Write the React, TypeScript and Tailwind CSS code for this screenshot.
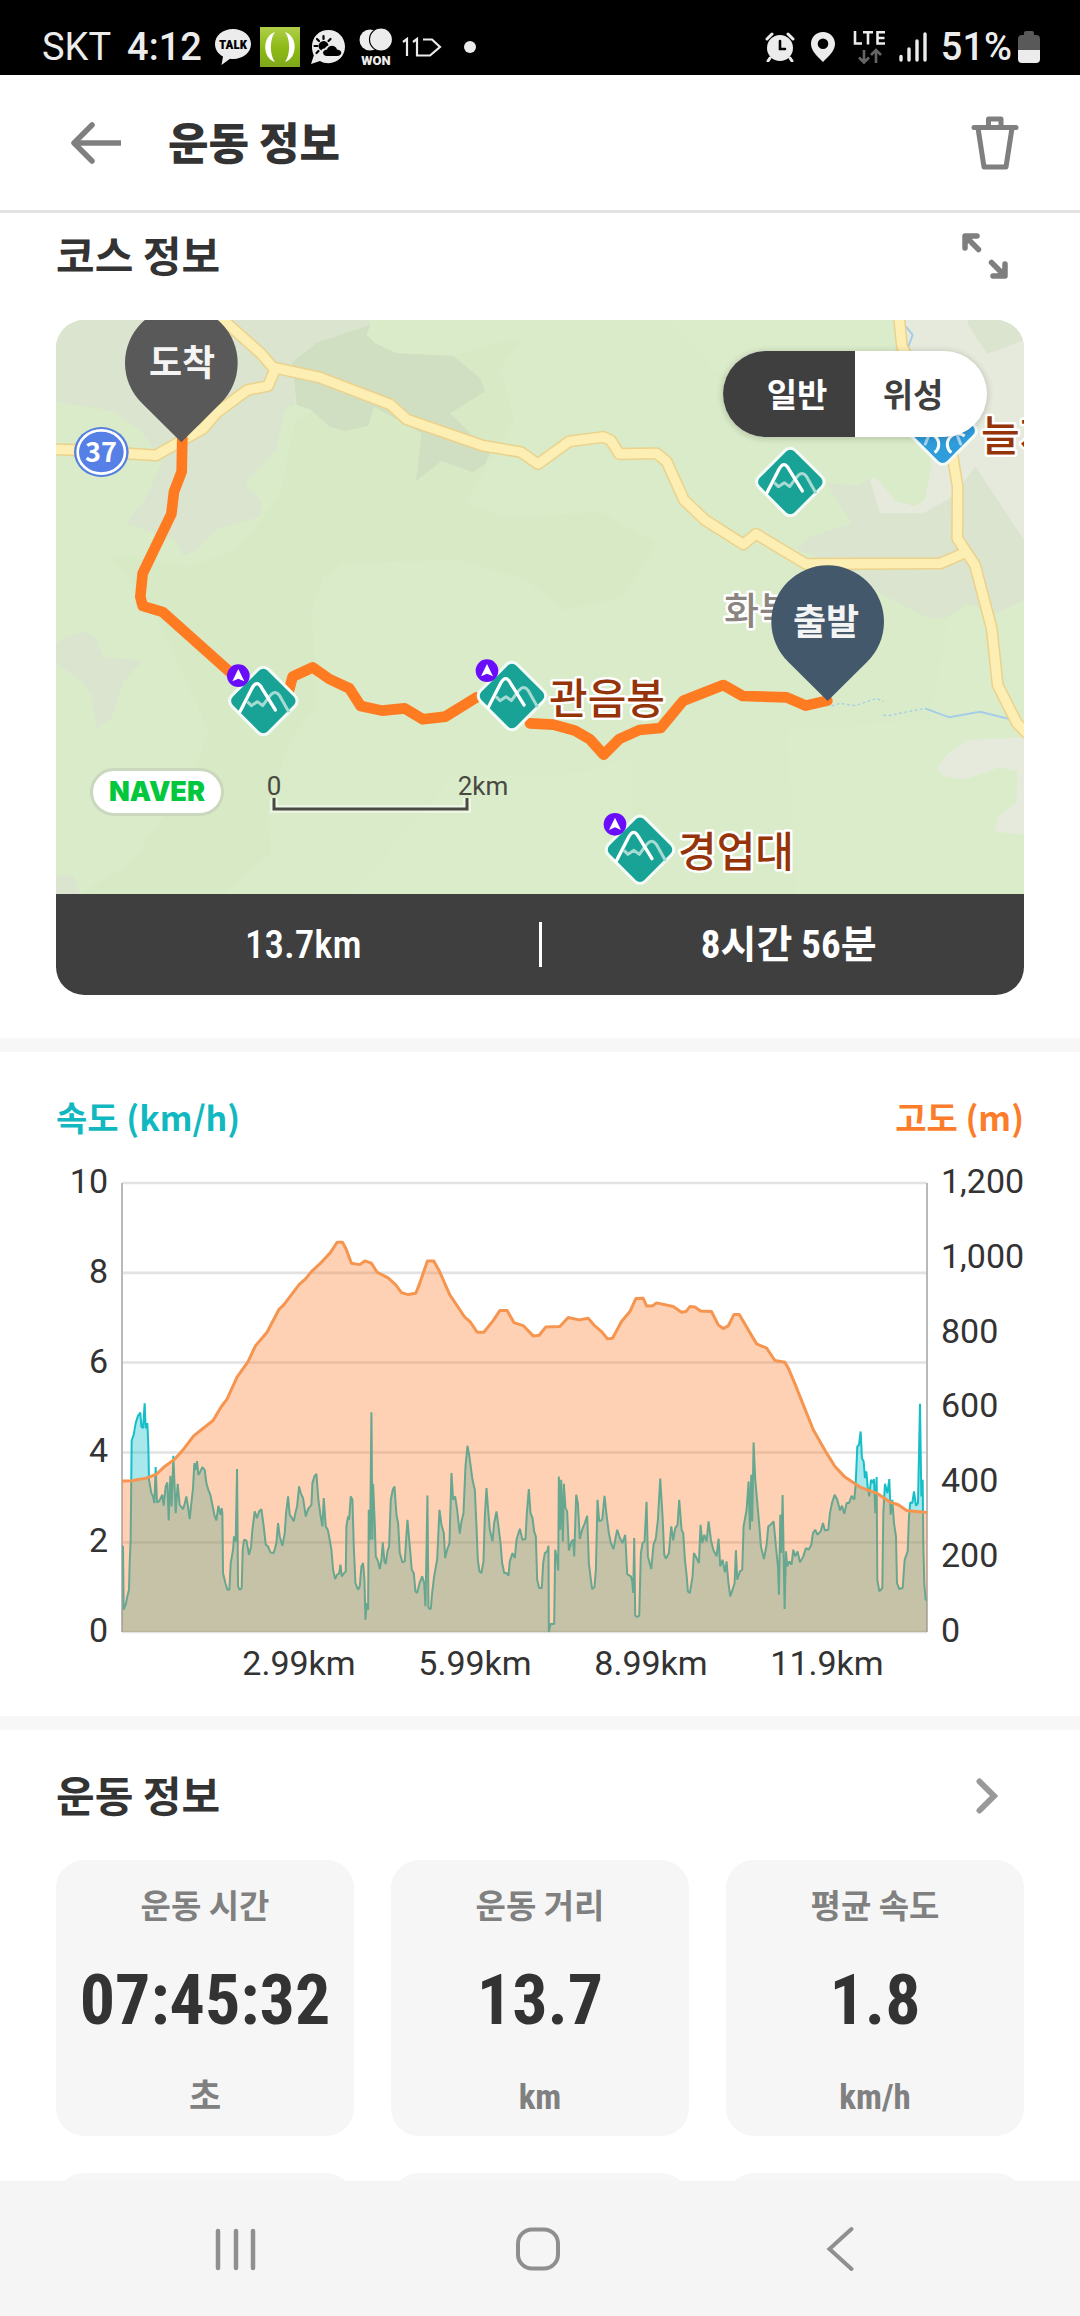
import type { ReactNode } from "react";

// distance / altitude samples, in plot units (x 217..2631, y 309..1657)
const ALTITUDE =
  "217,1204 245,1203 290,1195 322,1182 345,1160 375,1138 400,1110 432,1068 490,1022 515,980 532,958 562,892 595,845 617,798 652,757 688,688 702,675 748,614 768,596 785,575 810,552 842,518 862,487 878,487 888,505 905,550 930,554 945,543 965,550 982,577 1015,594 1038,615 1055,638 1075,644 1098,640 1108,615 1133,543 1152,543 1168,572 1200,645 1245,712 1262,727 1282,757 1302,757 1330,722 1350,692 1372,692 1392,728 1420,737 1450,768 1468,766 1488,741 1530,740 1555,713 1588,720 1615,715 1635,738 1655,755 1673,777 1688,775 1715,725 1740,695 1758,656 1780,655 1790,678 1808,678 1820,669 1870,680 1895,697 1908,695 1920,680 1935,681 1952,693 1985,695 2005,735 2020,746 2035,738 2052,704 2068,704 2120,792 2150,805 2175,842 2205,847 2215,865 2235,912 2260,975 2290,1050 2330,1120 2355,1160 2385,1192 2430,1222 2480,1240 2520,1267 2545,1275 2570,1292 2631,1298";

// speed samples, y runs 0..757 below the top of the speed band
const SPEED =
  "217,500 220,500 222,690 228,675 233,650 238,630 240,550 243,480 246,182 252,165 258,130 265,108 272,98 275,140 280,145 285,70 288,145 293,130 296,200 298,300 305,340 310,350 314,370 318,262 322,368 328,365 338,345 342,378 348,320 353,308 357,422 362,288 366,380 371,228 378,400 384,312 390,375 400,388 405,372 410,350 415,380 420,418 425,370 430,325 434,250 438,270 442,244 446,285 452,275 458,262 465,270 470,310 476,330 482,345 488,375 494,405 500,422 506,378 512,405 516,385 518,400 520,580 527,610 533,630 539,630 543,550 550,510 553,470 558,485 562,268 565,620 570,630 576,625 579,510 583,480 590,482 598,525 604,500 608,450 615,395 622,415 628,395 635,388 642,440 648,495 655,500 662,518 672,520 680,490 685,430 690,470 698,498 705,460 709,400 715,350 720,405 727,415 732,425 738,395 742,380 748,320 753,340 760,355 768,410 775,388 785,375 788,310 794,290 800,282 806,360 812,405 818,440 822,355 828,440 834,450 838,470 845,510 850,570 856,598 862,585 868,582 872,555 876,590 882,582 888,575 890,440 895,410 898,420 903,350 908,360 912,500 917,610 925,630 930,620 935,560 940,550 944,600 947,720 951,670 955,690 957,390 961,480 965,97 968,480 970,312 975,430 978,530 985,545 990,568 995,540 999,488 1004,545 1008,553 1013,515 1018,500 1023,360 1029,330 1034,320 1040,405 1045,430 1050,520 1058,548 1065,545 1069,480 1073,420 1080,500 1086,570 1092,580 1097,635 1102,640 1110,608 1117,590 1123,610 1127,680 1133,347 1136,685 1143,688 1147,640 1153,590 1162,540 1169,390 1175,435 1182,460 1186,535 1192,510 1199,490 1205,280 1210,360 1216,350 1222,390 1230,462 1235,425 1241,400 1247,260 1253,198 1258,225 1264,270 1268,300 1275,330 1280,440 1284,540 1289,575 1295,580 1301,545 1305,410 1310,325 1315,390 1320,450 1328,485 1333,430 1340,395 1346,440 1352,490 1357,550 1363,580 1370,580 1376,588 1380,545 1388,520 1395,535 1400,480 1410,447 1418,480 1427,478 1431,400 1437,328 1442,400 1448,415 1453,455 1458,470 1462,600 1468,625 1476,625 1480,550 1485,520 1492,515 1496,498 1497,757 1502,733 1513,733 1516,510 1522,540 1525,572 1527,290 1531,450 1534,300 1539,485 1542,312 1547,385 1552,395 1557,512 1565,485 1570,480 1573,530 1579,345 1584,370 1590,478 1597,450 1605,430 1612,408 1617,550 1623,600 1627,628 1634,622 1638,570 1643,360 1648,425 1657,420 1664,348 1670,405 1677,460 1683,490 1691,508 1697,475 1702,450 1710,475 1718,490 1726,465 1732,583 1743,590 1747,605 1750,640 1753,475 1756,708 1762,712 1768,708 1773,520 1778,490 1784,485 1790,366 1794,530 1804,568 1811,495 1818,475 1824,420 1831,296 1838,410 1843,525 1848,537 1857,520 1864,440 1870,482 1876,445 1883,435 1888,360 1895,450 1900,460 1905,540 1910,585 1914,635 1920,640 1928,590 1932,520 1940,535 1947,550 1952,435 1957,490 1963,465 1970,485 1976,425 1983,480 1990,510 2000,530 2006,477 2011,560 2018,540 2025,578 2030,545 2035,605 2041,650 2048,630 2054,610 2058,512 2062,600 2070,575 2077,570 2081,440 2090,390 2096,305 2100,450 2104,285 2107,425 2111,188 2116,300 2123,380 2128,435 2133,500 2142,538 2150,495 2155,440 2162,435 2171,425 2178,500 2184,560 2187,645 2191,405 2194,520 2198,346 2204,688 2208,515 2212,560 2218,545 2225,555 2230,510 2236,530 2243,515 2250,548 2260,530 2268,505 2276,510 2284,495 2289,460 2296,450 2302,465 2312,455 2319,430 2325,452 2335,450 2340,400 2346,370 2354,345 2362,360 2370,392 2376,378 2383,402 2390,370 2397,370 2405,348 2413,360 2417,315 2422,200 2427,195 2432,155 2436,235 2441,245 2445,295 2449,275 2453,320 2458,350 2463,300 2468,310 2472,298 2476,400 2480,292 2482,600 2488,635 2497,625 2500,400 2505,312 2512,340 2518,298 2522,405 2527,360 2532,430 2538,470 2541,610 2548,628 2558,625 2564,540 2573,515 2577,410 2581,368 2587,370 2592,335 2598,378 2604,370 2610,72 2614,350 2618,300 2620,500 2623,615 2627,660 2631,660";

const ROADS = [
  "M10,418 L72,420 L318,436 L460,355 L500,308 L592,240 L654,228 L675,178",
  "M500,12 L632,130 L668,172 L808,202 L1020,283 L1070,328 L1298,407 L1412,426 L1464,462 L1558,394 L1660,381 L1682,391 L1708,432 L1820,430 L1850,455 L1902,570 L1965,630 L2080,703 L2118,672 L2268,762 L2672,760 L2745,728",
  "M2546,10 L2556,110 L2640,260 L2708,440 L2723,530 L2722,685 L2745,720 L2775,765 L2825,955 L2843,1125 L2900,1238 L2940,1280",
];

const ROUTE =
  "M397,385 L395,485 L372,545 L364,612 L278,790 L271,860 L278,888 L338,906 L600,1140 M716,1145 L728,1100 L788,1072 L838,1107 L898,1135 L932,1188 L996,1202 L1064,1195 L1119,1228 L1186,1220 L1280,1162 M1440,1240 L1510,1244 L1575,1262 L1620,1288 L1661,1334 L1708,1287 L1768,1260 L1832,1254 L1900,1172 L2020,1125 L2078,1158 L2210,1162 L2267,1187 L2332,1172";

const STATS = [
  { label: "운동 시간", value: "07:45:32", unit: "초" },
  { label: "운동 거리", value: "13.7", unit: "km" },
  { label: "평균 속도", value: "1.8", unit: "km/h" },
];

const StatusBar = () => (
  <div className="flex h-[75px] shrink-0 items-center justify-between bg-black pl-[42px] pr-10 pt-[18px] font-['Roboto',sans-serif] text-[38px] leading-[56px] text-[#ececec]">
    <div className="flex items-center">
      <span>SKT</span>
      <span className="ml-4 font-medium">4:12</span>
      <svg className="ml-3 h-9 w-[38px]" viewBox="0 0 38 36">
        <path d="M19 0C9 0 1 6.500 1 15c0 5.500 3.300 10 8 12.600L7.500 36l8.500-6.200c1 .1 2 .2 3 .2 10 0 18-6.500 18-15S29 0 19 0z" fill="#ececec" />
        <text x="19" y="20" textAnchor="middle" className="fill-black font-['Roboto_Condensed',sans-serif] text-[13px] font-black">TALK</text>
      </svg>
      <svg className="ml-2 h-10 w-10" viewBox="0 0 40 40">
        <defs>
          <linearGradient id="lime" x1="0" y1="0" x2="0" y2="1">
            <stop offset="0" stopColor="#b0cf48" />
            <stop offset=".55" stopColor="#8cb914" />
            <stop offset="1" stopColor="#80a81c" />
          </linearGradient>
        </defs>
        <rect width="40" height="40" fill="url(#lime)" />
        <path d="M15 5C2 9 2 31 15 35 9.500 28 9.500 12 15 5zM25 5c13 4 13 26 0 30 5.500-7 5.500-23 0-30z" fill="#fff" />
      </svg>
      <svg className="ml-2.5 h-9 w-9" viewBox="0 0 36 36">
        <path d="M18.500 1C8.500 1 2 8.500 2 17.500c0 4 .8 6.500 1.800 9L1 35l9-3c2.500 1.500 5 2.200 8.500 2.200C28 34.200 35 27 35 17.600 35 8.500 28 1 18.500 1z" fill="#ececec" />
        <path d="M9.500 20a5 5 0 1 1 9-3.500c-2 .5-3 1.500-3.500 3-2 0-3 .5-3.500 2z" />
        <path d="M13.500 7v3M4.500 17h3M7 10l2 2M20.500 10l-2 2M6.500 24l2-2" stroke="#000" strokeWidth="2.200" strokeLinecap="round" />
        <path d="M17 27c-5 0-5.500-6 0-6.500 1.500-5 8.500-5 10 0 6 .5 5.500 6.500 0 6.500z" />
      </svg>
      <svg className="ml-3 h-[38px] w-9 overflow-visible" viewBox="0 0 36 38">
        <circle cx="12" cy="12" r="10.500" fill="#ececec" />
        <circle cx="23" cy="11.500" r="11.500" fill="#ececec" stroke="#000" strokeWidth="1.200" />
        <text x="18" y="37" textAnchor="middle" className="fill-[#ececec] font-['Roboto',sans-serif] text-[13px] font-black">WON</text>
      </svg>
      <svg className="ml-2 h-5 w-10" viewBox="0 0 40 20" fill="none" stroke="#ececec" strokeWidth="2.200">
        <path d="M1 5l4-3v17M11 5l4-3v16.500h13l10-8.500-8-7.500h-9" />
      </svg>
      <span className="ml-[22px] h-3 w-3 rounded-full bg-[#ececec]" />
    </div>
    <div className="flex items-center">
      <svg className="h-[30px] w-[30px]" viewBox="0 0 30 30">
        <circle cx="15" cy="16" r="13" fill="#ececec" />
        <path d="M2 7l5-5M28 7l-5-5M5 26l-2 3M25 26l2 3" stroke="#ececec" strokeWidth="3" strokeLinecap="round" />
        <path d="M15 9v8h5" fill="none" stroke="#000" strokeWidth="2.600" strokeLinecap="round" />
      </svg>
      <svg className="ml-4 h-[30px] w-6" viewBox="0 0 24 30">
        <path fillRule="evenodd" d="M12 0C5 0 0 5 0 12c0 7 7 13 12 18 5-5 12-11 12-18C24 5 19 0 12 0zm0 6.500a5.300 5.300 0 1 1 0 10.600 5.300 5.300 0 0 1 0-10.600z" fill="#ececec" />
      </svg>
      <svg className="ml-[18px] h-[34px] w-[34px]" viewBox="0 0 34 34">
        <path d="M2 1v12.500h7M10 2.200h10M15 2v12.500M32 2.200h-7.500v11.300H32M25 8h6.500" fill="none" stroke="#ececec" strokeWidth="2.600" />
        <path d="M11 20v12M6 27.500l5 5 5-5M23 33V20M18 25l5-5 5 5" fill="none" stroke="#666" strokeWidth="2.600" />
      </svg>
      <svg className="ml-3 h-[30px] w-7" viewBox="0 0 28 30" stroke="#ececec" strokeWidth="3.400" strokeLinecap="round">
        <path d="M2 24.500V28M10 17v11M18 9v19M26 2v26" />
      </svg>
      <span className="ml-3.5 font-medium">51%</span>
      <svg className="ml-1.5 h-8 w-[22px]" viewBox="0 0 22 32">
        <path d="M6 4V2q0-2 2-2h6q2 0 2 2v2h2q4 0 4 4v11H0V8q0-4 4-4z" fill="#595959" />
        <path d="M0 19h22v9q0 4-4 4H4q-4 0-4-4z" fill="#ececec" />
      </svg>
    </div>
  </div>
);

const Peak = ({ x, y, badge = false }: { x: number; y: number; badge?: boolean }) => (
  <g transform={`translate(${x} ${y})`}>
    <rect x="-78" y="-78" width="156" height="156" rx="22" transform="rotate(45)" fill="#18a396" stroke="#f4fbf6" strokeWidth="9" />
    <path d="M-48,2 L-36,14 L-18,2 L-2,14 L14,-8 L22,-18 Q36,-34 49,-16 L77,34" fill="none" stroke="#a6dbd3" strokeWidth="9" strokeLinejoin="round" />
    <path d="M-71,34 L-34,-38 Q-19,-66 -4,-38 L36,27" fill="none" stroke="#fff" strokeWidth="10" strokeLinecap="round" />
    {badge && (
      <g transform="translate(-75 -76)">
        <circle r="34" fill="#6a0dfb" />
        <path d="M0,-20 L18,17 L0,9 L-18,17Z" fill="#fff" />
      </g>
    )}
  </g>
);

const MapPin = ({ x, y, className }: { x: number; y: number; className: string }) => (
  <path transform={`translate(${x} ${y})`} d="M0,237 L-118,120 A169,169 0 1 1 118,120Z" className={className} />
);

const MapLabel = ({ x, y, children }: { x: number; y: number; children: ReactNode }) => (
  <text
    x={x}
    y={y}
    className="fill-[#953409] stroke-white stroke-[5px] font-['Noto_Sans_CJK_KR',sans-serif] text-[42px] font-medium [paint-order:stroke] [stroke-linejoin:round]"
  >
    {children}
  </text>
);

const CourseMap = () => (
  <svg className="block h-[574px] w-full bg-[#d9ebc8]" viewBox="0 0 968 574" preserveAspectRatio="xMidYMid slice">
    <g transform="translate(-6 -10) scale(0.33333)">
      {/* woodland */}
      <path d="M735,330 L690,560 L560,720 L420,770 L185,735 L330,940 L475,1260 L430,1400 L240,1660 L90,1752 L520,1752 L664,1630 L650,1500 L720,1290 L800,1190 L785,900 L820,800 L880,760 L1230,750 L1430,810 L1540,900 L1720,860 L1820,700 L1650,605 L1380,625 L1245,580 L1394,330 L1350,180 L1420,80 L1200,140Z" fill="#d7e9c5" />
      <path d="M1850,30 L2000,190 L2300,180 L2540,120 L2540,30Z M2210,1260 L2640,1230 L2700,900 L2922,860 L2922,1752 L2240,1752Z M900,1752 L1130,1500 L1200,1400 L1600,1390 L1750,1340 L1740,1752Z" fill="#dbeccb" />
      <path d="M18,30 H960 V50 L800,98 L726,158 L735,285 L715,285 L700,310 L680,420 L585,520 L635,575 L630,620 L500,658 L440,720 L400,735 L375,690 L228,640 L285,570 L335,460 L280,370 L200,310 L160,298 L18,275Z" fill="#dbe4cf" />
      <path d="M960,45 L800,98 L726,158 L740,285 L780,298 L840,350 L885,362 L955,348 L972,290 L1115,370 L1098,513 L1175,452 L1268,487 L1305,462 L1320,430 L1200,310 L1306,244 L1290,205 L1210,138 L1040,130 L975,100 L950,75Z" fill="#d0dec2" />
      <path d="M18,1000 L50,980 L100,965 L135,980 L160,1042 L280,1050 L220,1115 L185,1225 L140,1258 L125,1155 L90,1110 L18,1060Z M18,1695 L70,1698 L90,1752 H18Z" fill="#dbe4cf" />
      <path d="M2565,30 H2922 V720 H2600 L2490,610 L2448,518 L2475,500 L2540,575 L2595,588 L2625,570 L2645,460 L2620,300 L2575,120Z" fill="#e6eadc" />
      <path d="M2330,520 L2420,527 L2460,510 L2490,610 L2620,610 L2707,560 L2777,470 L2922,690 V870 L2840,910 L2750,880 L2690,925 L2635,925 L2490,850 L2400,780 L2240,715 L2280,680 L2405,640Z M2754,30 H2922 V90 L2812,132 L2754,45Z" fill="#dbe4cf" />
      <path d="M2660,1380 L2690,1335 L2755,1290 L2922,1282 V1575 L2835,1565 L2845,1520 L2900,1475 L2902,1383 L2850,1372 L2745,1408 L2680,1398Z" fill="#e6eadc" />
      {/* streams */}
      <path d="M2500,1216 L2520,1216 L2625,1195 M2345,1188 L2370,1180 L2415,1187 L2480,1165 L2500,1175" fill="none" stroke="#a5cdea" strokeWidth="4" strokeDasharray="8 8" />
      <path d="M2625,1195 L2698,1222 L2790,1205 L2875,1226 M2568,50 L2588,75 L2575,110" fill="none" stroke="#a5cdea" strokeWidth="6" />
      {ROADS.map((d) => (
        <path key={d} d={d} fill="none" stroke="#ebd28c" strokeWidth="37" strokeLinejoin="round" />
      ))}
      {ROADS.map((d) => (
        <path key={d} d={d} fill="none" stroke="#fdeeb3" strokeWidth="28" strokeLinejoin="round" />
      ))}
      <path d={ROUTE} fill="none" stroke="#ff7b22" strokeWidth="32" strokeLinejoin="round" strokeLinecap="round" />
      <Peak x={2221} y={516} />
      <Peak x={640} y={1173} badge />
      <Peak x={1386} y={1158} badge />
      <Peak x={1770} y={1619} badge />
      <g transform="translate(2678 362)">
        <rect x="-78" y="-78" width="156" height="156" rx="22" transform="rotate(45)" fill="#2f9ddb" stroke="#f4fbf6" strokeWidth="9" />
        <path d="M-62,16 A31,31 0 0 1 -24,66 M66,16 A31,31 0 1 0 26,66" fill="none" stroke="#fff" strokeWidth="9" />
        <path d="M-52,40 L-40,10 M42,10 L54,40" stroke="#a9d6f2" strokeWidth="9" strokeLinecap="round" />
      </g>
      <ellipse cx="154" cy="426" rx="82" ry="75" fill="#5680e0" />
      <ellipse cx="154" cy="426" rx="71" ry="65" fill="#5680e6" stroke="#fff" strokeWidth="8" />
    </g>
    <text x="45" y="142" textAnchor="middle" className="fill-white font-['Noto_Sans_CJK_KR',sans-serif] text-[27px] font-bold">37</text>
    <text x="668" y="304" className="fill-[#8a8580] stroke-white stroke-[5px] font-['Noto_Sans_CJK_KR',sans-serif] text-[38px] font-medium [paint-order:stroke] [stroke-linejoin:round]">화북</text>
    <MapLabel x={493} y={394}>관음봉</MapLabel>
    <MapLabel x={622} y={547}>경업대</MapLabel>
    <MapLabel x={925} y={131}>늘재</MapLabel>
    <g transform="translate(-6 -10) scale(0.33333)">
      <MapPin x={394} y={160} className="fill-[#595959]" />
      <MapPin x={2333} y={936} className="fill-[#44586b]" />
    </g>
    <g textAnchor="middle" className="fill-[#f4f4f4] font-['Noto_Sans_CJK_KR',sans-serif] text-[36px] font-bold">
      <text x="126" y="56">도착</text>
      <text x="770" y="315">출발</text>
    </g>
    <path d="M218 478v11h193v-11" fill="none" stroke="#fff" strokeOpacity=".5" strokeWidth="8" />
    <path d="M218 478v11h193v-11" fill="none" stroke="#484a42" strokeWidth="3" />
    <g textAnchor="middle" className="fill-[#484a42] font-['Roboto',sans-serif] text-[26px]">
      <text x="218" y="475">0</text>
      <text x="427" y="475">2km</text>
    </g>
  </svg>
);

const CourseSection = () => (
  <section className="px-14 pb-[43px] pt-[13px]">
    <div className="flex items-center justify-between">
      <h2 className="pb-1 text-[42px] font-bold leading-[56px]">코스 정보</h2>
      <button type="button" aria-label="expand" className="mr-4 text-[#7f7f7f]">
        <svg className="h-[46px] w-[46px]" viewBox="0 0 46 46" fill="none" stroke="currentColor" strokeWidth="5.500" strokeLinecap="round" strokeLinejoin="round">
          <path d="M3 15V3h12M4 4l12.500 12.500M43 31v12H31M42 42L29.500 29.500" />
          <path d="M3 3h10L3 13zM43 43H33l10-10z" fill="currentColor" stroke="none" />
        </svg>
      </button>
    </div>
    <div className="relative mt-[34px] overflow-hidden rounded-[28px]">
      <CourseMap />
      <div className="absolute right-[37px] top-[31px] flex h-[86px] overflow-hidden rounded-full bg-white text-[33px] font-bold leading-[48px] shadow-[0_1px_6px_1px_rgba(0,0,0,0.16)]">
        <button type="button" className="w-[132px] bg-[#3f3f3f] pb-0.5 pl-4 text-white">일반</button>
        <button type="button" className="w-[132px] pb-0.5 pr-4 text-[#3f3f3f]">위성</button>
      </div>
      <a
        href="#naver"
        className="absolute left-[34px] top-[448px] flex h-12 w-[134px] items-center justify-center rounded-full border-[3px] border-[#cbd8bd] bg-white font-['Inter',sans-serif] text-[27px] font-black leading-8 text-[#03c73c]"
      >
        NAVER
      </a>
      <div className="flex h-[101px] items-center bg-[#3f3f3f] font-['Roboto_Condensed','Noto_Sans_CJK_KR',sans-serif] text-[39px] font-bold leading-[52px] text-white">
        <span className="flex-1 pl-3 text-center font-medium">13.7km</span>
        <span className="h-[45px] w-[3px] bg-white" />
        <span className="flex-1 pl-3 text-center">8시간 56분</span>
      </div>
    </div>
  </section>
);

const ChartSection = () => (
  <section className="px-14 pb-9 pt-[43px]">
    <div className="flex justify-between text-[34px] font-bold leading-[44px]">
      <h3 className="text-[#12b8c0]">속도 (km/h)</h3>
      <h3 className="text-[#fb7d2b]">고도 (m)</h3>
    </div>
    <div className="mt-[25px] flex font-['Roboto',sans-serif] text-[34px] leading-[34px]">
      <div className="flex h-[483px] w-[66px] shrink-0 flex-col justify-between pr-3.5 text-right">
        {[10, 8, 6, 4, 2, 0].map((n) => (
          <span key={n}>{n}</span>
        ))}
      </div>
      <div className="min-w-0 flex-1 pt-[19px]">
        <svg className="block h-[449px] w-full overflow-visible" viewBox="217 309 2414 1348" preserveAspectRatio="none" fill="none">
          <path d="M217,309H2631M217,579H2631M217,848H2631M217,1118H2631M217,1388H2631M217,1657H2631" stroke="#e2e2e2" strokeWidth="8" />
          <path d="M217,309V1657M2631,309V1657" stroke="#b9b9b9" strokeWidth="6" />
          <g transform="translate(0 900)">
            <polygon points={`217,757 ${SPEED} 2631,757`} fill="#1bc3cc" fillOpacity=".38" />
            <polyline points={SPEED} stroke="#16bfc8" strokeWidth="6" strokeLinejoin="bevel" />
          </g>
          <polygon points={`217,1657 ${ALTITUDE} 2631,1657`} fill="#ff7c28" fillOpacity=".35" />
          <polyline points={ALTITUDE} stroke="#f5954f" strokeWidth="9" strokeLinejoin="round" />
        </svg>
        <div className="mt-3.5 grid grid-cols-4 pl-[89px] pr-3 text-center">
          <span>2.99km</span>
          <span>5.99km</span>
          <span>8.99km</span>
          <span>11.9km</span>
        </div>
      </div>
      <div className="flex h-[483px] w-[97px] shrink-0 flex-col justify-between pl-3.5">
        {["1,200", "1,000", "800", "600", "400", "200", "0"].map((n) => (
          <span key={n}>{n}</span>
        ))}
      </div>
    </div>
  </section>
);

const StatsSection = () => (
  <section className="px-14 pt-9">
    <div className="flex items-center justify-between">
      <h2 className="pb-1 text-[42px] font-bold leading-[56px]">운동 정보</h2>
      <button type="button" aria-label="more" className="mr-[26px] text-[#999]">
        <svg className="h-9 w-[22px]" viewBox="0 0 22 36" fill="none" stroke="currentColor" strokeWidth="6" strokeLinecap="round">
          <path d="M3.500 3.500L18 18 3.500 32.500" />
        </svg>
      </button>
    </div>
    <div className="mt-[34px] grid grid-cols-3 gap-[37px]">
      {STATS.map((s) => (
        <div key={s.label} className="flex h-[276px] flex-col items-center rounded-[28px] bg-[#f6f6f6] pt-5 text-[33px] leading-[48px] text-[#808080]">
          <span className="font-bold">{s.label}</span>
          <span className="mt-[34px] font-['Roboto_Condensed',sans-serif] text-[70px] font-bold leading-[76px] text-[#333]">
            {s.value}
          </span>
          <span className="mt-9 font-['Roboto_Condensed','Noto_Sans_CJK_KR',sans-serif] text-[35px] font-bold">{s.unit}</span>
        </div>
      ))}
      {STATS.map((s) => (
        <div key={s.unit} aria-hidden className="h-[276px] rounded-[28px] bg-[#f6f6f6]" />
      ))}
    </div>
  </section>
);

const NavBar = () => (
  <nav className="grid h-[135px] shrink-0 grid-cols-3 items-center bg-[#f5f5f5] pl-[85px] pr-[89px] pt-px text-[#8f8f8f]">
    <button type="button" aria-label="recents" className="flex justify-center">
      <svg className="h-11 w-11" viewBox="0 0 44 44" stroke="currentColor" strokeWidth="4.500" strokeLinecap="round">
        <path d="M4 4v37M22 4v37M39 4v37" />
      </svg>
    </button>
    <button type="button" aria-label="home" className="flex justify-center">
      <svg className="h-11 w-11" viewBox="0 0 44 44" fill="none" stroke="currentColor" strokeWidth="4">
        <rect x="2" y="2.500" width="40" height="39" rx="14" />
      </svg>
    </button>
    <button type="button" aria-label="back" className="flex justify-center">
      <svg className="h-[46px] w-7" viewBox="0 0 28 46" fill="none" stroke="currentColor" strokeWidth="4" strokeLinecap="round">
        <path d="M25.500 3L3.500 23l22 20" />
      </svg>
    </button>
  </nav>
);

const App = () => {
  return (
    <div className="flex h-screen flex-col bg-white font-['Noto_Sans_CJK_KR',sans-serif] text-[#333]">
      <StatusBar />
      <header className="flex h-[138px] shrink-0 items-center border-b-[3px] border-[#e3e3e3] pl-[70px] pr-[60px] text-[#7f7f7f]">
        <button type="button" aria-label="back">
          <svg className="h-[42px] w-[52px]" viewBox="0 0 52 42" fill="none" stroke="currentColor" strokeWidth="5.500">
            <path d="M22 3L4 21l18 18" strokeLinecap="round" strokeLinejoin="round" />
            <path d="M4 21h47" />
          </svg>
        </button>
        <h1 className="ml-[46px] flex-1 pb-1 text-[44px] font-black leading-[60px] text-[#333]">운동 정보</h1>
        <button type="button" aria-label="delete">
          <svg className="h-[54px] w-[50px]" viewBox="0 0 50 54" fill="none" stroke="currentColor" strokeWidth="5" strokeLinecap="round" strokeLinejoin="round">
            <path d="M4 11.500h42M18.500 11V3h12.500v8M8 12l6 39h22l6-39" />
          </svg>
        </button>
      </header>
      <main className="min-h-0 flex-1 overflow-y-auto [scrollbar-width:none]">
        <CourseSection />
        <div className="h-3.5 bg-[#f7f7f7]" />
        <ChartSection />
        <div className="h-3.5 bg-[#f7f7f7]" />
        <StatsSection />
      </main>
      <NavBar />
    </div>
  );
};

export default App;
